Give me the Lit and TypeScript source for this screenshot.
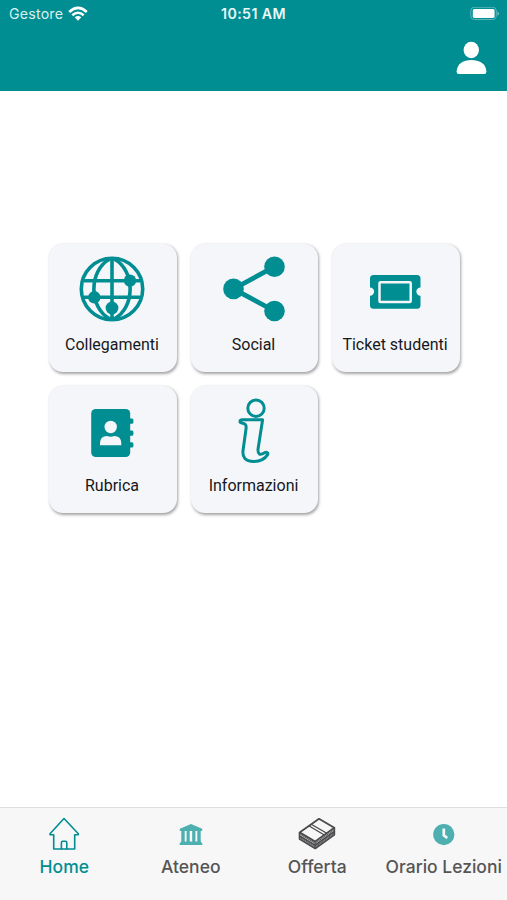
import { LitElement, html, css, svg } from "lit";
import { customElement } from "lit/decorators.js";

const cards = [
  {
    label: "Collegamenti",
    icon: svg`<g fill="none" stroke="currentColor" stroke-width="3.6">
        <circle cx="33" cy="33" r="30.7"/><path d="M33 2V64M5 24.7H61M5 41.3H61"/>
        <path d="M31 3C9.5 14 9.5 52 31 63M35 3C56.5 14 56.5 52 35 63"/></g>
        <circle cx="51" cy="24.7" r="6.2"/><circle cx="15.3" cy="41.3" r="6.2"/><circle cx="33" cy="52" r="6.4"/>`,
  },
  {
    label: "Social",
    icon: svg`<path d="M53.5 10.7L12.5 32.9L53.5 55" fill="none" stroke="currentColor" stroke-width="4.8"/>
        <circle cx="12.5" cy="32.9" r="10.3"/><circle cx="53.5" cy="10.7" r="10.3"/><circle cx="53.5" cy="55" r="10.3"/>`,
  },
  {
    label: "Ticket studenti",
    icon: svg`<path d="M11.5 19H55Q58.5 19 58.5 22.5V31.4A4.2 4.2 0 0 0 58.5 39.8V49.2Q58.5 52.7 55 52.7H11.5Q8 52.7 8 49.2V39.8A4.2 4.2 0 0 0 8 31.4V22.5Q8 19 11.5 19Z"/>
        <rect x="17.5" y="26.3" width="31.2" height="19.6" rx="1" fill="none" stroke="#f4f6fa" stroke-width="2.5"/>`,
  },
  {
    label: "Rubrica",
    icon: svg`<rect x="12.2" y="11" width="39" height="48" rx="4.5"/>
        <path d="M50 20.5H53Q54.4 20.5 54.4 22V24.3Q54.4 25.8 53 25.8H50ZM50 32.4H53Q54.4 32.4 54.4 33.9V36.2Q54.4 37.7 53 37.7H50ZM50 44.3H53Q54.4 44.3 54.4 45.8V48.1Q54.4 49.6 53 49.6H50Z"/>
        <g fill="#f4f6fa"><circle cx="31.7" cy="29" r="6.2"/><path d="M21 47.2V45Q21.3 38 28 38Q31.7 39.4 35.4 38Q42 38 42.3 45V47.2Z"/></g>`,
  },
  {
    label: "Informazioni",
    icon: svg`<g fill="none" stroke="currentColor" stroke-width="3" stroke-linejoin="round">
        <circle cx="35" cy="10.2" r="8.2"/>
        <path d="M21.5 21.8H41.6L37.2 50C36.2 56.5 39 57.6 43.5 54.8C45.4 53.6 47.6 54.6 46.6 56.6C43.6 61.5 38.5 63.4 32.5 63.4C24.5 63.4 21 59.6 22.1 52L25 31C25.6 27 24.3 25.4 20.8 25C18.4 24.7 18.2 21.8 21.5 21.8Z"/></g>`,
  },
];

const tabs = [
  {
    label: "Home", kind: "home",
    icon: svg`<g fill="none" stroke="#018e93" stroke-width="1.6" stroke-linejoin="round" stroke-linecap="round">
        <path d="M20 2.5L34.3 17.7V18.7H30.7V33H9.7V18.7H6V17.7Z"/><path d="M17.4 33V26.7Q17.4 25.3 18.8 25.3H21.4Q22.8 25.3 22.8 26.7V33"/></g>`,
  },
  {
    label: "Ateneo", kind: "ateneo",
    icon: svg`<g fill="#4dafb0"><path d="M20 8L31.2 12.7V14.9H8.8V12.7Z"/><path d="M10.3 15H13.7V26H10.3ZM15.6 15H18.7V26H15.6ZM21.2 15H24.4V26H21.2ZM26.3 15H29.7V26H26.3Z"/><path d="M9.8 25.4H30.2V26.7H31.3V28.9H8.7V26.7H9.8Z"/></g>`,
  },
  {
    label: "Offerta", kind: "offerta",
    icon: svg`<g fill="none" stroke="#4b4a4c" stroke-linejoin="round">
        <path d="M2.6 16.4L22 2.8L37.3 11.8L18.2 25.6Z" stroke-width="1.8"/>
        <path d="M11.8 9.8L27.3 19M14.2 8.2L29.8 17.3" stroke-width="1.3"/>
        <path d="M2.6 16.4V23L18.2 32.4L37.3 18.8V11.8M2.6 20L18.2 29.2L37.3 15.4" stroke-width="1.8"/>
        <path d="M3.6 18.6L18.2 27.3L36.8 14M3.6 22L18.2 30.9L36.8 17.4M18.2 25.6V32.2" stroke-width=".9"/></g>`,
  },
  {
    label: "Orario Lezioni", kind: "orario",
    icon: svg`<circle cx="19.8" cy="18.6" r="10.6" fill="#4dafb0"/><path d="M19.8 12.4V19.3L23.3 22" fill="none" stroke="#f7f7f7" stroke-width="2.7"/>`,
  },
];

@customElement("app-root")
export class AppRoot extends LitElement {
  static styles = css`
    :host { display: flex; flex-direction: column; height: 900px; background: #fff; overflow: hidden; }
    svg { display: block; flex: none; }
    header { box-sizing: border-box; height: 91.3px; background: #018e93; color: #fff; flex: none; }
    .status { display: grid; grid-template-columns: 1fr auto 1fr; align-items: center; height: 27px; padding: 0 7px 0 9px; font: 14.2px/27px Inter, sans-serif; }
    .carrier { display: flex; align-items: center; gap: 5px; color: #d8f0f0; letter-spacing: .2px; }
    .time { font-weight: 600; color: #e9f8f8; letter-spacing: .38px; margin-right: 2px; }
    .battery { justify-self: end; }
    .toolbar { display: flex; justify-content: flex-end; padding: 14px 20px 0 0; }
    main { flex: 1; padding: 153px 47px 0 49px; }
    .grid { display: grid; grid-template-columns: repeat(3, 127.5px); grid-auto-rows: 127.5px; gap: 14px; }
    .card { box-sizing: border-box; display: flex; flex-direction: column; align-items: center; padding-top: 12px; border-radius: 14px; background: #f4f6fa; box-shadow: 1px 1.5px 3px rgba(0,0,0,.36); color: #018e93; }
    .card svg { fill: currentColor; margin-left: -1px; }
    .name { margin: 11.5px 0 0 -1.5px; font: 16px/22px Roboto, sans-serif; color: #17181a; white-space: nowrap; }
    nav { box-sizing: border-box; flex: none; height: 93px; display: grid; grid-template-columns: repeat(4, 126.5px); background: #f7f7f7; border-top: 1px solid #dedede; padding: 8px 0 0 1px; }
    .tab { display: flex; flex-direction: column; align-items: center; font: 500 17.5px/24px Inter, sans-serif; color: #555; white-space: nowrap; }
    .tab span { margin-top: 3px; }
    .tab.home { color: #018e93; }
  `;

  render() {
    return html`
      <header>
        <div class="status">
          <div class="carrier"><span>Gestore</span>
            <svg width="20" height="16" viewBox="0 0 20 16" fill="none" stroke="#fff" stroke-width="2.5">
              <path d="M1.2 6Q10 -2.2 18.8 6M4.3 9.3Q10 4.2 15.7 9.3"/><path d="M6.7 11.3Q10 8.6 13.3 11.3L10 14.8Z" fill="#fff" stroke="none"/>
            </svg></div>
          <div class="time">10:51 AM</div>
          <svg class="battery" width="30" height="14" viewBox="0 0 30 14">
            <rect x=".8" y=".3" width="25.5" height="12.2" rx="3.5" fill="none" stroke="#5db5b8" stroke-width="1"/>
            <rect x="2.8" y="2.1" width="21.8" height="8.8" rx="1.6" fill="#fff"/><path d="M27.5 4.2Q30.5 6.5 27.5 8.8Z" fill="#79c3c6"/>
          </svg>
        </div>
        <div class="toolbar">
          <svg width="31" height="34" viewBox="0 0 31 34" fill="#fff"><ellipse cx="15.3" cy="9" rx="7.7" ry="8.3"/><path d="M.6 30.5C1.2 22.5 7.5 19 15.3 19S30 22.5 30.4 30.5Q30.5 33 28.2 33H2.8Q.5 33 .6 30.5Z"/></svg>
        </div>
      </header>
      <main><div class="grid">
        ${cards.map((c) => html`<div class="card"><svg width="66" height="66" viewBox="0 0 66 66">${c.icon}</svg><div class="name">${c.label}</div></div>`)}
      </div></main>
      <nav>
        ${tabs.map((t) => html`<div class="tab ${t.kind}"><svg width="40" height="36" viewBox="0 0 40 36">${t.icon}</svg><span>${t.label}</span></div>`)}
      </nav>`;
  }
}
